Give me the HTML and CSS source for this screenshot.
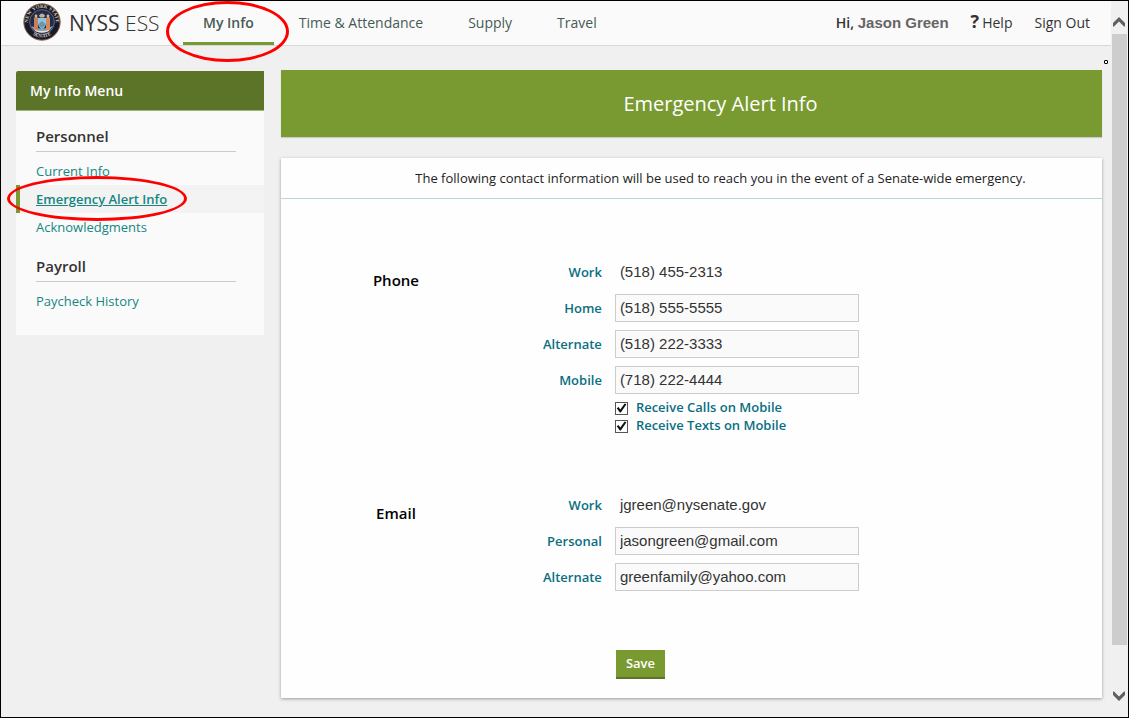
FILE: index.html
```html
<!DOCTYPE html>
<html lang="en">
<head>
<meta charset="utf-8">
<title>NYSS ESS - Emergency Alert Info</title>
<link rel="stylesheet" href="styles.css">
</head>
<body>
<div class="window">
  <div class="page">
    <header class="topbar">
      <a class="brand" href="#">
        <svg class="seal" viewBox="0 0 38 38" aria-hidden="true">
          <defs>
            <path id="arc-top" d="M5.6 22 A13.8 13.8 0 1 1 32.4 22"/>
            <path id="arc-bottom" d="M5 27 A16.8 16.8 0 0 0 33 27"/>
          </defs>
          <circle cx="19" cy="19" r="18.2" fill="#17192f" stroke="#8a6d45" stroke-width="1"/>
          <circle cx="19" cy="19" r="12.4" fill="#1c2d55" stroke="#b09468" stroke-width="0.6"/>
          <path d="M8 23q3 6 11 7q8-1 11-7l-3 1q-8 3-16 0z" fill="#8f9bb0"/>
          <path d="M11 15l2-2 2 2v12h-4z" fill="#c9805a"/>
          <path d="M23 15l2-2 2 2v12h-4z" fill="#d08a5c"/>
          <circle cx="13" cy="13" r="1.4" fill="#d9b48f"/>
          <circle cx="25" cy="13" r="1.4" fill="#d9b48f"/>
          <path d="M15 15h8v6q-1 4-4 5q-3-1-4-5z" fill="#8fc3e3"/>
          <path d="M15.5 21l3.500-3 3.500 3-1 2-2.500 2-2.500-2z" fill="#6a98a0"/>
          <path d="M16 12.500q3-4 6 0l-1 2h-4z" fill="#c9b184"/>
          <path d="M11 26.500q8 3 16 0l-2 2q-6 2-12 0z" fill="#e3e0d6"/>
          <text class="seal-text"><textPath href="#arc-top" startOffset="50%">NEW YORK STATE</textPath></text>
          <text class="seal-text"><textPath href="#arc-bottom" startOffset="50%">SENATE</textPath></text>
        </svg>
        <span class="brand-name">NYSS <span class="brand-light">ESS</span></span>
      </a>
      <nav class="nav">
        <a class="nav-item nav-active" href="#">My Info<span class="mark mark-nav"></span></a>
        <a class="nav-item" href="#">Time &amp; Attendance</a>
        <a class="nav-item" href="#">Supply</a>
        <a class="nav-item" href="#">Travel</a>
      </nav>
      <div class="account">
        <span class="greeting">Hi, <span class="user">Jason Green</span></span>
        <a class="account-link" href="#"><b class="question">?</b>Help</a>
        <a class="account-link" href="#">Sign Out</a>
      </div>
    </header>
    <span class="dot"></span>
    <div class="content">
      <aside class="sidebar">
        <h2 class="sidebar-title">My Info Menu</h2>
        <h3 class="sidebar-heading">Personnel</h3>
        <ul class="menu">
          <li class="menu-item"><a class="menu-link" href="#">Current Info</a></li>
          <li class="menu-item menu-current"><a class="menu-link" href="#">Emergency Alert Info</a><span class="mark mark-menu"></span></li>
          <li class="menu-item"><a class="menu-link" href="#">Acknowledgments</a></li>
        </ul>
        <h3 class="sidebar-heading">Payroll</h3>
        <ul class="menu">
          <li class="menu-item"><a class="menu-link" href="#">Paycheck History</a></li>
        </ul>
      </aside>
      <main class="main">
        <h1 class="hero">Emergency Alert Info</h1>
        <form class="card">
          <p class="intro">The following contact information will be used to reach you in the event of a Senate-wide emergency.</p>
          <section class="group">
            <h2 class="group-title">Phone</h2>
            <div class="fields">
              <div class="row"><span class="label">Work</span><span class="value">(518) 455-2313</span></div>
              <div class="row"><label class="label" for="home">Home</label><input class="value box" id="home" type="tel" value="(518) 555-5555"></div>
              <div class="row"><label class="label" for="alt">Alternate</label><input class="value box" id="alt" type="tel" value="(518) 222-3333"></div>
              <div class="row"><label class="label" for="mobile">Mobile</label><input class="value box" id="mobile" type="tel" value="(718) 222-4444"></div>
              <div class="options">
                <label class="option"><input class="check" type="checkbox" checked>Receive Calls on Mobile</label>
                <label class="option"><input class="check" type="checkbox" checked>Receive Texts on Mobile</label>
              </div>
            </div>
          </section>
          <section class="group">
            <h2 class="group-title">Email</h2>
            <div class="fields">
              <div class="row"><span class="label">Work</span><span class="value">jgreen@nysenate.gov</span></div>
              <div class="row"><label class="label" for="personal">Personal</label><input class="value box" id="personal" type="email" value="jasongreen@gmail.com"></div>
              <div class="row"><label class="label" for="altmail">Alternate</label><input class="value box" id="altmail" type="email" value="greenfamily@yahoo.com"></div>
            </div>
          </section>
          <div class="actions"><button class="save" type="button">Save</button></div>
        </form>
      </main>
    </div>
  </div>
  <div class="scrollbar" aria-hidden="true">
    <svg class="arrow" viewBox="0 0 16 32"><path d="M2 25v-3.500l6-6 6 6V25h-1l-5-5-5 5z" fill="#606060"/></svg>
    <div class="track"><div class="thumb"></div></div>
    <svg class="arrow arrow-down" viewBox="0 0 16 32"><path d="M2 25v-3.500l6-6 6 6V25h-1l-5-5-5 5z" fill="#606060"/></svg>
  </div>
</div>
</body>
</html>
```
FILE: styles.css
```css
* { box-sizing: border-box; }

body {
  margin: 0;
  font-family: "Open Sans", sans-serif;
  font-size: 13px;
  color: #222;
  background: #f0f0f0;
}

h1, h2, h3, p, ul { margin: 0; padding: 0; }
a { text-decoration: none; }

.window {
  display: flex;
  min-height: 100vh;
  border: 1px solid #000;
}

.page {
  position: relative;
  flex: 1;
  min-width: 0;
}

.topbar {
  display: flex;
  height: 45px;
  padding: 0 21px 0 22px;
  background: #fafafa;
  border-bottom: 1px solid #d8d8d8;
}

.brand {
  display: flex;
  align-items: center;
  gap: 8px;
  width: 160px;
  color: #333;
}

.seal { width: 38px; height: 38px; margin-bottom: 2px; flex: none; }

.seal-text {
  font-family: "Liberation Serif", serif;
  font-size: 5px;
  font-weight: bold;
  fill: #d8cdb8;
  text-anchor: middle;
}

.brand-name { font-size: 21px; line-height: 44px; white-space: nowrap; }
.brand-light { font-weight: 300; }

.nav { display: flex; gap: 5px; }

.nav-item {
  position: relative;
  padding: 0 20px;
  font-size: 14px;
  line-height: 43px;
  color: #465a55;
  white-space: nowrap;
}

.nav-active { font-weight: 600; border-bottom: 3px solid #799a31; }

.mark {
  position: absolute;
  z-index: 2;
  border: 3px solid #f00;
  border-radius: 50%;
  pointer-events: none;
}

.mark-nav { left: -17px; right: -15px; top: 0; height: 61px; }
.mark-menu { left: -13px; top: -9px; width: 180px; height: 45px; }

.account {
  display: flex;
  gap: 22px;
  margin-left: auto;
  font-size: 14px;
  line-height: 43px;
  white-space: nowrap;
}

.greeting { font-weight: 600; color: #333; }
.user { font-family: "Liberation Sans", sans-serif; font-size: 15px; font-weight: bold; color: #666; }
.account-link { color: #333; }
.question { margin-right: 3px; font-size: 18px; line-height: 1; }

.dot {
  position: absolute;
  top: 59px;
  right: 3px;
  width: 4px;
  height: 4px;
  border: 1px solid #000;
  border-radius: 1px;
  background: #fff;
}

.content {
  display: flex;
  align-items: flex-start;
  gap: 17px;
  padding: 24px 9px 18px 15px;
}

.sidebar {
  width: 248px;
  flex: none;
  margin-top: 1px;
  padding-bottom: 20px;
  background: #fafafa;
}

.sidebar-title {
  height: 40px;
  padding-left: 14px;
  border-bottom: 1px solid #a3b37c;
  border-radius: 2px 0 0 0;
  background: #5b7427;
  font-size: 14px;
  font-weight: 600;
  line-height: 39px;
  color: #fff;
}

.sidebar-heading {
  margin: 10px 28px 5px 20px;
  border-bottom: 1px solid #ccc;
  font-size: 15px;
  font-weight: 600;
  line-height: 30px;
  color: #333;
}

.menu { list-style: none; }

.menu-item {
  position: relative;
  padding-left: 20px;
  line-height: 28px;
}

.menu-current {
  padding-left: 16px;
  border-left: 4px solid #799a31;
  background: #f3f3f3;
  font-weight: 600;
}

.menu-current .menu-link { text-decoration: underline; }
.menu-link { color: #158782; }

.main { flex: 1; min-width: 0; }

.hero {
  padding-left: 58px;
  background: #799a31;
  box-shadow: 0 1px 1px #ccc;
  font-size: 20px;
  font-weight: 400;
  line-height: 67px;
  text-align: center;
  color: #fff;
}

.card {
  margin-top: 21px;
  padding-bottom: 19px;
  background: #fefefe;
  box-shadow: 0 1px 3px #999;
}

.intro {
  padding-left: 58px;
  border-bottom: 1px solid #b9d4db;
  line-height: 40px;
  text-align: center;
}

.group {
  display: grid;
  grid-template-columns: 28% 1fr;
}

.group { margin-top: 59px; }
.group + .group { margin-top: 57px; }

.group-title {
  padding-top: 7px;
  font-size: 15px;
  font-weight: 600;
  line-height: 30px;
  text-align: center;
  color: #000;
}

.fields { display: grid; gap: 8px; }

.row {
  display: grid;
  grid-template-columns: 91px 244px;
  grid-template-rows: 28px;
  column-gap: 13px;
}

.label, .option {
  font-weight: 600;
  color: #0b6f82;
}

.label { line-height: 29px; text-align: right; }

.value {
  padding: 0 5px;
  font-family: "Liberation Sans", sans-serif;
  font-size: 15px;
  line-height: 28px;
  color: #333;
}

.box {
  width: 100%;
  height: 100%;
  margin: 0;
  padding: 0 4px 2px;
  border: 1px solid #ccc;
  border-radius: 0;
  background: #fafafa;
  line-height: 24px;
}

.options { margin: -4px 0 0 104px; }

.option {
  display: flex;
  align-items: center;
  gap: 8px;
  line-height: 18px;
}

.check {
  appearance: none;
  width: 13px;
  height: 13px;
  margin: 2px 0 0;
  border: 1px solid #555;
  background: #fff;
}

.check:checked::before {
  content: "";
  display: block;
  height: 11px;
  background: #111;
  clip-path: polygon(8% 52%, 24% 42%, 40% 64%, 80% 8%, 96% 16%, 45% 92%, 36% 92%);
}

.actions {
  padding: 59px 0 0 calc(28% + 105px);
}

.save {
  display: block;
  padding: 0 10px;
  border: 0;
  border-bottom: 2px solid #5b7427;
  background: #799a31;
  font: 600 13px/27px "Open Sans", sans-serif;
  color: #fff;
}

.scrollbar {
  display: flex;
  flex-direction: column;
  width: 17px;
  flex: none;
  padding-right: 1px;
  background: #f0f0f0;
}

.arrow { display: block; width: 16px; height: 33px; }
.arrow-down { transform: rotate(180deg); }
.track { flex: 1; }
.thumb { height: 94%; margin-left: 1px; background: #cdcdcd; }
```
